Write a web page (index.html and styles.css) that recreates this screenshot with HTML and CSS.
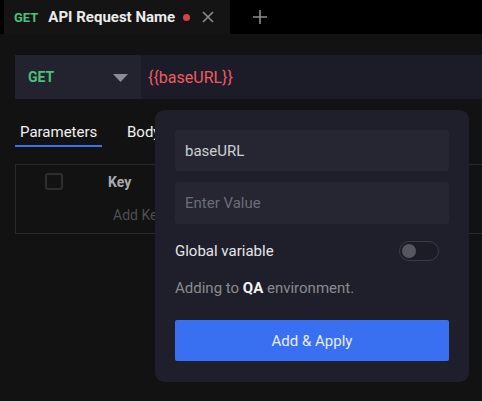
FILE: index.html
```html
<!DOCTYPE html>
<html>
<head>
<meta charset="utf-8">
<link rel="stylesheet" href="styles.css">
</head>
<body>
<div class="tabbar">
  <div class="tab">
    <span class="method">GET</span>
    <span class="tab-title">API Request Name</span>
    <span class="dot"></span>
    <svg class="close" width="12" height="12" viewBox="0 0 12 12"><path d="M1 1L11 11M11 1L1 11" stroke="#8a8d93" stroke-width="1.6" fill="none"/></svg>
  </div>
  <svg class="plus" width="14" height="14" viewBox="0 0 14 14"><path d="M7 0V14M0 7H14" stroke="#8a8d93" stroke-width="1.6" fill="none"/></svg>
</div>

<div class="urlbar">
  <div class="select">
    <span class="select-method">GET</span>
    <svg class="caret" width="15" height="8" viewBox="0 0 15 8"><path d="M0 0H15L7.5 8Z" fill="#8a8d95"/></svg>
  </div>
  <div class="url">{{baseURL}}</div>
</div>

<div class="subtabs">
  <div class="subtab active">Parameters</div>
  <div class="subtab">Body</div>
</div>

<div class="table">
  <div class="row head">
    <div class="cell-check"><span class="checkbox"></span></div>
    <div class="cell-key">Key</div>
  </div>
  <div class="row">
    <div class="cell-check"></div>
    <div class="cell-key placeholder">Add Key</div>
  </div>
</div>

<div class="popover">
  <div class="field">baseURL</div>
  <div class="field empty">Enter Value</div>
  <div class="toggle-row">
    <span class="label">Global variable</span>
    <span class="toggle"><span class="knob"></span></span>
  </div>
  <div class="note">Adding to <b>QA</b> environment.</div>
  <div class="button">Add &amp; Apply</div>
</div>
</body>
</html>
```
FILE: styles.css
```css
* { box-sizing: border-box; }
html, body { margin: 0; padding: 0; }
body {
  width: 482px;
  height: 401px;
  background: #121212;
  font-family: Roboto, "Noto Sans", sans-serif;
  position: relative;
  overflow: hidden;
}
.tabbar {
  height: 34px;
  background: #000;
  display: flex;
  align-items: stretch;
}
.tab {
  margin-left: 4px;
  width: 226px;
  background: #141414;
  display: flex;
  align-items: center;
  padding-left: 10px;
}
.method {
  color: #4cc17a;
  font-size: 13px;
  font-weight: 700;
}
.tab-title {
  color: #ececec;
  font-size: 15px;
  font-weight: 700;
  margin-left: 10px;
}
.dot {
  width: 7px;
  height: 7px;
  border-radius: 50%;
  background: #d9414a;
  margin-left: 8px;
}
.close { margin-left: 12px; }
.plus { margin-left: 23px; align-self: center; }

.urlbar {
  margin: 21px 0 0 15px;
  height: 44px;
  display: flex;
}
.select {
  width: 126px;
  background: #22232e;
  display: flex;
  align-items: center;
  padding-left: 13px;
}
.select-method {
  color: #4cc17a;
  font-size: 14px;
  font-weight: 700;
  width: 85px;
}
.caret { margin-top: 1px; }
.url {
  flex: 1;
  background: #1b1c28;
  color: #ef5b62;
  font-size: 16px;
  display: flex;
  align-items: center;
  padding-left: 7px;
}

.subtabs {
  display: flex;
  margin: 20px 0 0 15px;
  height: 28px;
}
.subtab {
  font-size: 15px;
  color: #f2f2f2;
  padding: 4px 5px 0;
  height: 28px;
}
.subtab.active {
  border-bottom: 2px solid #3b73ee;
  width: 87px;
}
.subtab + .subtab { margin-left: 20px; }

.table {
  margin: 17px 0 0 15px;
  border-top: 1px solid #2a2a2a;
  border-bottom: 1px solid #2a2a2a;
  border-left: 1px solid #2a2a2a;
  height: 70px;
  display: flex;
  flex-direction: column;
}
.row {
  display: flex;
  align-items: center;
  height: 33px;
}
.cell-check {
  width: 92px;
  display: flex;
  padding-left: 29px;
}
.checkbox {
  width: 18px;
  height: 17px;
  border: 2px solid #2e2e2e;
  border-radius: 3px;
}
.cell-key {
  font-size: 14px;
  font-weight: 700;
  color: #a9abaf;
}
.cell-key.placeholder {
  font-weight: 400;
  color: #4e5055;
  padding-left: 5px;
  font-size: 14px;
}

.popover {
  position: absolute;
  left: 155px;
  top: 110px;
  width: 314px;
  height: 272px;
  background: #1e1f2a;
  border-radius: 9px;
  padding: 20px;
  display: flex;
  flex-direction: column;
}
.field {
  height: 41px;
  background: #252632;
  border-radius: 3px;
  color: #cfd0d3;
  font-size: 15px;
  display: flex;
  align-items: center;
  padding-left: 10px;
}
.field.empty {
  color: #6b6e77;
  margin-top: 11px;
  height: 42px;
}
.toggle-row {
  display: flex;
  align-items: center;
  justify-content: space-between;
  margin-top: 16px;
  height: 22px;
}
.label {
  color: #e6e6e8;
  font-size: 15px;
}
.toggle {
  width: 40px;
  height: 20px;
  border: 1px solid #3a3b45;
  border-radius: 10px;
  background: #1b1c25;
  margin-right: 10px;
  display: flex;
  align-items: center;
  padding-left: 2px;
}
.knob {
  width: 14px;
  height: 14px;
  border-radius: 50%;
  background: #55575e;
}
.note {
  color: #8a8b90;
  font-size: 15px;
  margin-top: 17px;
}
.note b { color: #f2f2f2; font-weight: 700; }
.button {
  margin-top: 23px;
  height: 41px;
  background: #3970f1;
  border-radius: 2px;
  color: #e8ecf6;
  font-size: 15px;
  display: flex;
  align-items: center;
  justify-content: center;
}
```
